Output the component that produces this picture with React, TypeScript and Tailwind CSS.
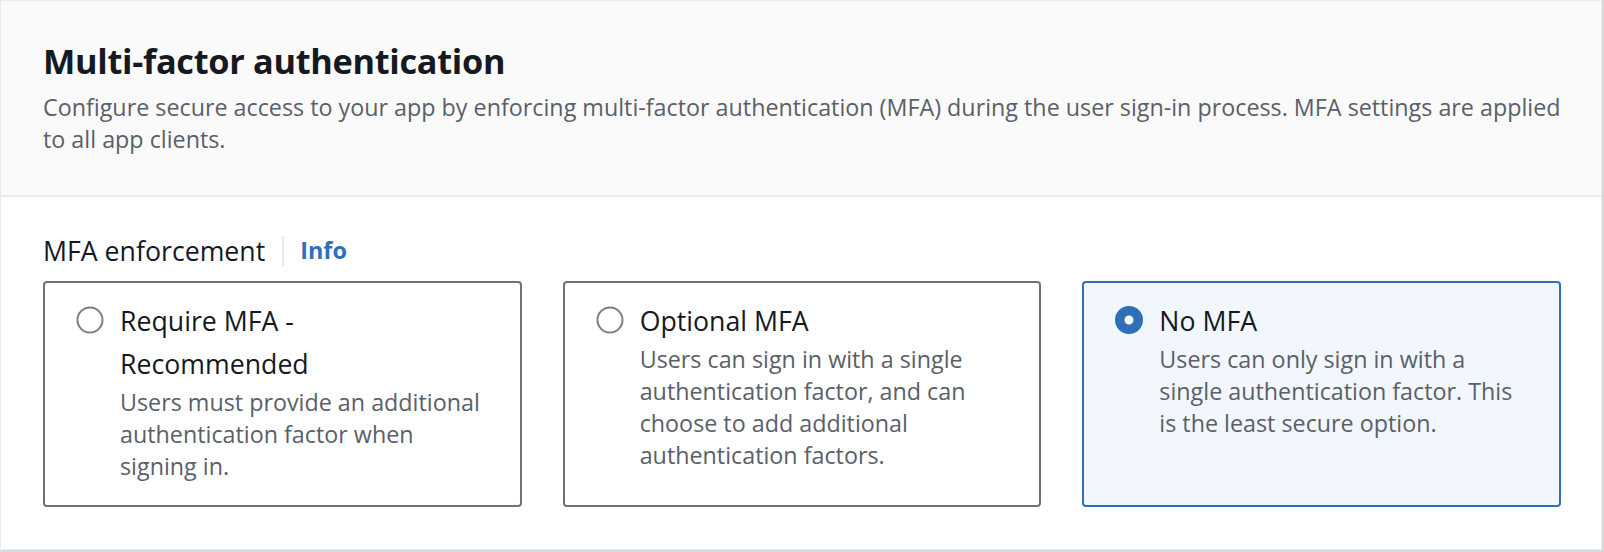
import { useState } from 'react';

type Option = {
  id: string;
  label: string[];
  description: string[];
};

// line breaks follow the reference so the tiles wrap the same way
const OPTIONS: Option[] = [
  {
    id: 'required',
    label: ['Require MFA -', 'Recommended'],
    description: ['Users must provide an additional', 'authentication factor when', 'signing in.'],
  },
  {
    id: 'optional',
    label: ['Optional MFA'],
    description: [
      'Users can sign in with a single',
      'authentication factor, and can',
      'choose to add additional',
      'authentication factors.',
    ],
  },
  {
    id: 'off',
    label: ['No MFA'],
    description: ['Users can only sign in with a', 'single authentication factor. This', 'is the least secure option.'],
  },
];

function RadioDot({ checked }: { checked: boolean }) {
  return (
    <svg width="28" height="28" viewBox="0 0 28 28" className="shrink-0">
      {checked ? (
        <circle cx="14" cy="14" r="9.25" fill="#ffffff" stroke="#2e70b8" strokeWidth="9.5" />
      ) : (
        <circle cx="14" cy="14" r="12.5" fill="#ffffff" stroke="#7a7e85" strokeWidth="2" />
      )}
    </svg>
  );
}

export default function App() {
  const [selected, setSelected] = useState('off');

  return (
    <div
      className="w-[1604px] h-[552px] bg-white"
      style={{ fontFamily: '"Open Sans", "Noto Sans", Arial, sans-serif' }}
    >
      <div className="w-[1602px] h-[550px] bg-white border border-[#e9ebed] shadow-[1px_1px_1px_1px_rgba(0,7,22,0.15)] flex flex-col">
        {/* Header */}
        <div className="bg-[#fafafa] border-b-2 border-[#e9ebed] h-[196px] pl-[42px] pr-[40px] pt-[40px]">
          <h2 className="text-[34.3px] leading-[40px] font-bold text-[#16191f] tracking-[-0.3px]">
            Multi-factor authentication
          </h2>
          <p className="mt-[11px] whitespace-nowrap text-[23.3px] leading-[31.5px] text-[#5a6068]">
            Configure secure access to your app by enforcing multi-factor authentication (MFA) during the user sign-in
            process. MFA settings are applied
            <br />
            to all app clients.
          </p>
        </div>

        {/* Body */}
        <div className="pl-[42px] pr-[40px] pt-[34px]">
          <div className="flex items-center h-[40px]">
            <span className="text-[26.7px] text-[#16191f]">MFA enforcement</span>
            <span className="ml-[17px] h-[30px] border-l-2 border-[#e9ebed]" />
            <a href="#" className="ml-[16px] text-[23.4px] font-bold text-[#2e70b8]">
              Info
            </a>
          </div>

          <div className="mt-[10px] grid grid-cols-3 gap-[41px]">
            {OPTIONS.map((opt) => {
              const checked = opt.id === selected;
              return (
                <button
                  key={opt.id}
                  type="button"
                  onClick={() => setSelected(opt.id)}
                  className={`h-[226px] rounded-[4px] border-2 text-left pl-[31px] pr-[20px] pt-[16px] flex gap-[16px] items-start ${
                    checked ? 'border-[#2e70b8] bg-[#f1f7fc]' : 'border-[#6e737a] bg-white'
                  }`}
                >
                  <div className="pt-[7px]">
                    <RadioDot checked={checked} />
                  </div>
                  <div className="whitespace-nowrap">
                    <div className="text-[26.7px] leading-[43px] text-[#16191f]">
                      {opt.label.map((line) => (
                        <span key={line} className="block">
                          {line}
                        </span>
                      ))}
                    </div>
                    <div className="mt-[1px] text-[23.3px] leading-[32px] text-[#5a6068]">
                      {opt.description.map((line) => (
                        <span key={line} className="block">
                          {line}
                        </span>
                      ))}
                    </div>
                  </div>
                </button>
              );
            })}
          </div>
        </div>
      </div>
    </div>
  );
}
